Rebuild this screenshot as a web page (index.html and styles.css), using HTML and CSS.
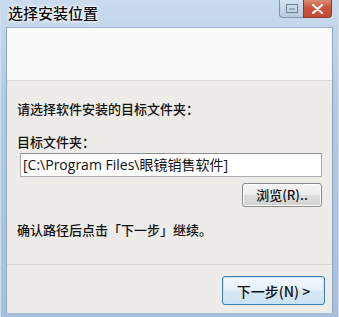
FILE: index.html
```html
<!DOCTYPE html>
<html lang="zh">
<head>
<meta charset="utf-8">
<link rel="stylesheet" href="styles.css">
</head>
<body>
<div class="window">
  <div class="titlebar">
    <div class="title">选择安装位置</div>
    <div class="controls">
      <div class="ctl ctl-min">
        <svg width="12" height="9" viewBox="0 0 12 9"><rect x="0.5" y="0.5" width="11" height="8" fill="none" stroke="#6f7f90"/><line x1="3" y1="5" x2="9" y2="5" stroke="#6f7f90"/></svg>
      </div>
      <div class="ctl ctl-close">
        <svg width="11" height="10" viewBox="0 0 11 10"><path d="M1 1 L10 9 M10 1 L1 9" stroke="#ffffff" stroke-width="2.2" stroke-linecap="round"/></svg>
      </div>
    </div>
  </div>
  <div class="client">
    <div class="header"></div>
    <div class="content">
      <div class="prompt">请选择软件安装的目标文件夹：</div>
      <div class="label">目标文件夹：</div>
      <div class="pathbox">[C:\Program Files\眼镜销售软件]</div>
      <div class="browse-row"><button class="btn btn-browse">浏览(R)..</button></div>
      <div class="note">确认路径后点击「下一步」继续。</div>
    </div>
    <div class="footer">
      <button class="btn btn-next">下一步(N) &gt;</button>
    </div>
  </div>
</div>
</body>
</html>
```
FILE: styles.css
```css
html, body {
  margin: 0;
  padding: 0;
  width: 339px;
  height: 317px;
  overflow: hidden;
  background: #a9c2dc;
}
.window {
  width: 339px;
  height: 317px;
  box-sizing: border-box;
  padding: 0 7px 4px 7px;
  display: flex;
  flex-direction: column;
  background: linear-gradient(to bottom, #c9dbee 0%, #b3cbe4 30%, #a6c0dc 100%);
  box-shadow: inset 1px 0 0 #cfdff0, inset -1px 0 0 #cfdff0;
  font-family: "Noto Sans CJK SC", "Noto Sans", sans-serif;
}
.titlebar {
  height: 27px;
  display: flex;
  justify-content: space-between;
  align-items: flex-start;
}
.title {
  margin-top: 3px;
  margin-left: 1px;
  font-size: 15px;
  font-weight: 500;
  line-height: 20px;
  color: #0a0a0a;
  text-shadow: 0 0 6px #ffffff, 0 0 3px #ffffff, 0 0 2px #ffffff;
}
.controls {
  display: flex;
}
.ctl {
  height: 18px;
  display: flex;
  align-items: center;
  justify-content: center;
  box-sizing: border-box;
}
.ctl-min {
  width: 24px;
  border: 1px solid #7f94ab;
  border-top: none;
  border-right: none;
  border-radius: 0 0 0 4px;
  background: linear-gradient(to bottom, #d4e2f0, #b6cbe0);
}
.ctl-close {
  width: 29px;
  border: 1px solid #8a3a2c;
  border-top: none;
  border-radius: 0 0 4px 0;
  background: linear-gradient(to bottom, #dc8a74 0%, #c9553d 45%, #c24a32 100%);
}
.client {
  flex: 1;
  display: flex;
  flex-direction: column;
  background: #eeece9;
  border: 1px solid #8da6c0;
  border-top: none;
  border-bottom: none;
  margin: 0 -1px;
}
.header {
  background: #fbfbfb;
  border-top: 1px solid #9fb4ca;
  border-bottom: 1px solid #d8d8d8;
  box-sizing: border-box;
  height: 54px;
}
.content {
  padding: 0 10px 0 10px;
  flex: 1;
  font-size: 13px;
  font-weight: 500;
  color: #111;
}
.prompt {
  margin-top: 19px;
  line-height: 18px;
}
.label {
  margin-top: 15px;
  line-height: 18px;
}
.pathbox {
  margin: 2px 0 0 3px;
  height: 24px;
  box-sizing: border-box;
  border: 1px solid #abadb3;
  border-top-color: #8e9096;
  background: #ffffff;
  font-family: "Open Sans", "Noto Sans CJK SC", sans-serif;
  font-size: 14px;
  font-weight: 400;
  line-height: 22px;
  padding-left: 2px;
  white-space: nowrap;
}
.browse-row {
  display: flex;
  justify-content: flex-end;
  margin-top: 6px;
}
.btn {
  font-family: "Noto Sans CJK SC", "Noto Sans", sans-serif;
  font-size: 13px;
  font-weight: 500;
  color: #111;
  border: 1px solid #8a8a8a;
  border-radius: 3px;
  background: linear-gradient(to bottom, #f6f6f6 0%, #ececec 48%, #dedede 52%, #d2d2d2 100%);
  box-shadow: inset 0 0 0 1px #fcfcfc;
  padding: 0;
}
.btn-browse {
  width: 80px;
  height: 24px;
  line-height: 20px;
}
.note {
  margin-top: 14px;
  line-height: 18px;
}
.footer {
  height: 49px;
  border-top: 1px solid #d6d5d3;
  box-sizing: border-box;
  display: flex;
  justify-content: flex-end;
  align-items: flex-start;
  padding: 11px 7px 0 0;
}
.btn-next {
  width: 103px;
  height: 29px;
  border-color: #3c7fb1;
  box-shadow: inset 0 0 0 1px #c5e6f8;
  background: linear-gradient(to bottom, #f2f8fc 0%, #e6f1f9 48%, #d6e8f5 52%, #cbe1f1 100%);
  font-size: 14px;
}
```
